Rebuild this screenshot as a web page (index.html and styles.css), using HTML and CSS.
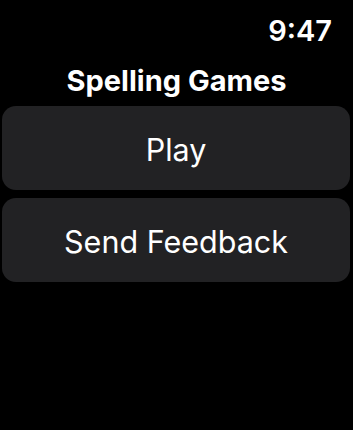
FILE: index.html
```html
<!DOCTYPE html>
<html>
<head>
<meta charset="utf-8">
<link rel="stylesheet" href="styles.css">
</head>
<body>
<div class="screen">
  <div class="status">
    <span class="time">9:47</span>
  </div>
  <h1 class="title">Spelling Games</h1>
  <div class="menu">
    <div class="btn">Play</div>
    <div class="btn">Send Feedback</div>
  </div>
</div>
</body>
</html>
```
FILE: styles.css
```css
html, body {
  margin: 0;
  padding: 0;
  background: #000;
}
.screen {
  width: 353px;
  height: 430px;
  background: #000;
  color: #fff;
  font-family: Inter, "Noto Sans", sans-serif;
  display: flex;
  flex-direction: column;
}
.status {
  display: flex;
  justify-content: flex-end;
  padding: 14px 21px 0 0;
  height: 34px;
}
.time {
  font-size: 29px;
  font-weight: 600;
  line-height: 34px;
}
.title {
  margin: 16px 0 0 0;
  text-align: center;
  font-size: 29px;
  font-weight: 700;
  line-height: 34px;
  height: 42px;
}
.menu {
  display: flex;
  flex-direction: column;
  gap: 8px;
  padding: 0 3px 0 2px;
}
.btn {
  height: 84px;
  border-radius: 14px;
  background: #222224;
  display: flex;
  align-items: center;
  justify-content: center;
  font-size: 30.5px;
  font-weight: 400;
  padding-top: 2px;
  box-sizing: border-box;
}
```
